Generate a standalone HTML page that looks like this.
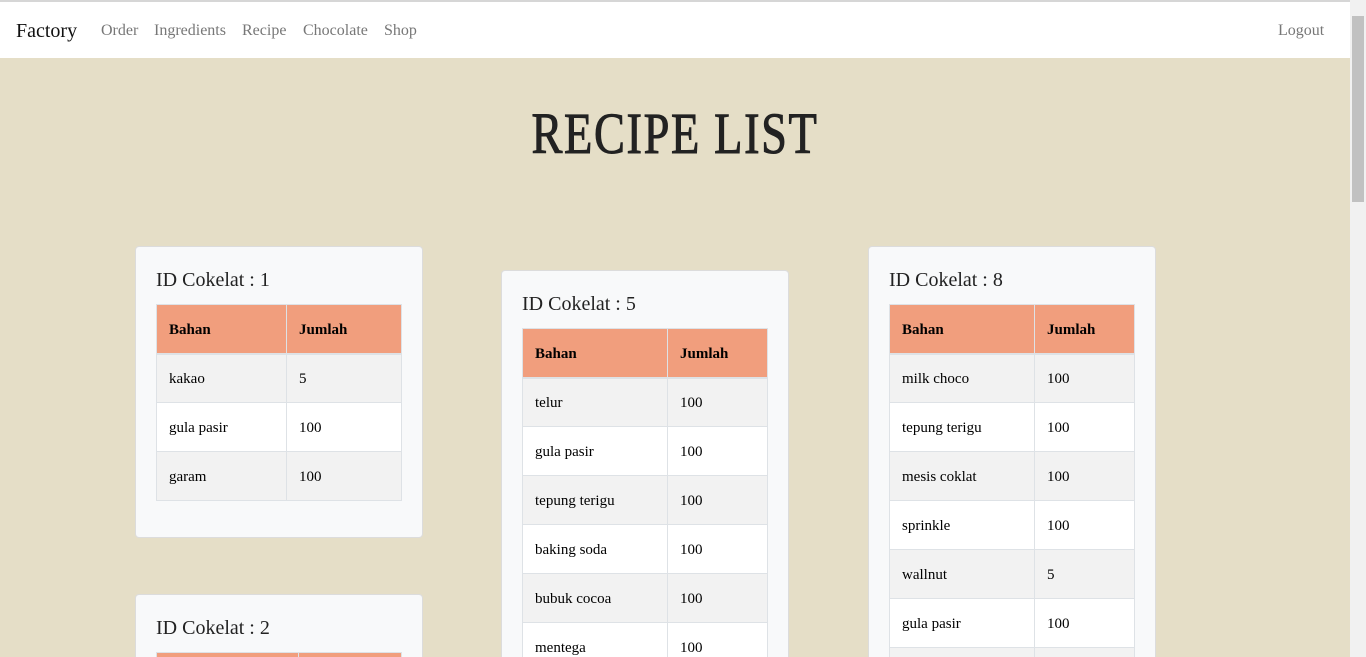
<!DOCTYPE html>
<html style="height:657px;overflow:hidden"><head><style>
*{box-sizing:border-box}
body{margin:0;width:1366px;height:657px;overflow:hidden;background:#e5dec7;font-family:"Liberation Serif",serif;position:relative}
.top{position:absolute;left:0;top:0;width:1350px;height:58px;background:#fff;border-top:2px solid #d6d6d6}
.top a{position:absolute;top:20px;font-size:16px;color:#777;text-decoration:none}
.brand{position:absolute;left:16px;top:18px;font-size:20px;color:#111}
.sb{position:absolute;right:0;top:0;width:16px;height:657px;background:#f1f1f1}
.sb div{position:absolute;left:2px;top:16px;width:12px;height:186px;background:#c1c1c1}
h1{position:absolute;left:0;width:1350px;top:100px;margin:0;text-align:center;font-size:58px;font-weight:normal;color:#222;transform:scaleX(.8);letter-spacing:2px;-webkit-text-stroke:1px #222}
.card{position:absolute;width:288px;background:#f8f9fa;border:1px solid #dcdcdc;border-radius:4px;padding:21px 20px 36px}
.card h3{margin:0 0 12px;font-weight:normal;font-size:20px;color:#222;line-height:24px}
table{border-collapse:collapse;width:246px;font-size:15px}
th,td{border:1px solid #dee2e6;height:49px;padding:3px 12px 0;text-align:left}
th{background:#f19e7d;height:49px;border-color:#dee2e6;border-bottom-width:2px}
tr:nth-child(even) td{background:#f2f2f2}
tr:nth-child(odd) td{background:#fff}
</style></head><body>
<div class="top"><span class="brand">Factory</span>
<a style="left:101px">Order</a><a style="left:154px">Ingredients</a><a style="left:242px">Recipe</a><a style="left:303px">Chocolate</a><a style="left:384px">Shop</a><a style="left:1278px">Logout</a></div>
<div class="sb"><div></div></div>
<h1>RECIPE LIST</h1>
<div class="card" style="left:135px;top:246px"><h3>ID Cokelat : 1</h3><table>
<tr><th style="width:130px">Bahan</th><th>Jumlah</th></tr>
<tr><td>kakao</td><td>5</td></tr><tr><td>gula pasir</td><td>100</td></tr><tr><td>garam</td><td>100</td></tr></table></div>
<div class="card" style="left:135px;top:594px"><h3>ID Cokelat : 2</h3><table>
<tr><th style="width:142px">Bahan</th><th>Jumlah</th></tr></table></div>
<div class="card" style="left:501px;top:270px"><h3>ID Cokelat : 5</h3><table>
<tr><th style="width:145px">Bahan</th><th>Jumlah</th></tr>
<tr><td>telur</td><td>100</td></tr><tr><td>gula pasir</td><td>100</td></tr><tr><td>tepung terigu</td><td>100</td></tr><tr><td>baking soda</td><td>100</td></tr><tr><td>bubuk cocoa</td><td>100</td></tr><tr><td>mentega</td><td>100</td></tr></table></div>
<div class="card" style="left:868px;top:246px"><h3>ID Cokelat : 8</h3><table>
<tr><th style="width:145px">Bahan</th><th>Jumlah</th></tr>
<tr><td>milk choco</td><td>100</td></tr><tr><td>tepung terigu</td><td>100</td></tr><tr><td>mesis coklat</td><td>100</td></tr><tr><td>sprinkle</td><td>100</td></tr><tr><td>wallnut</td><td>5</td></tr><tr><td>gula pasir</td><td>100</td></tr><tr><td>&nbsp;</td><td></td></tr></table></div>
</body></html>
